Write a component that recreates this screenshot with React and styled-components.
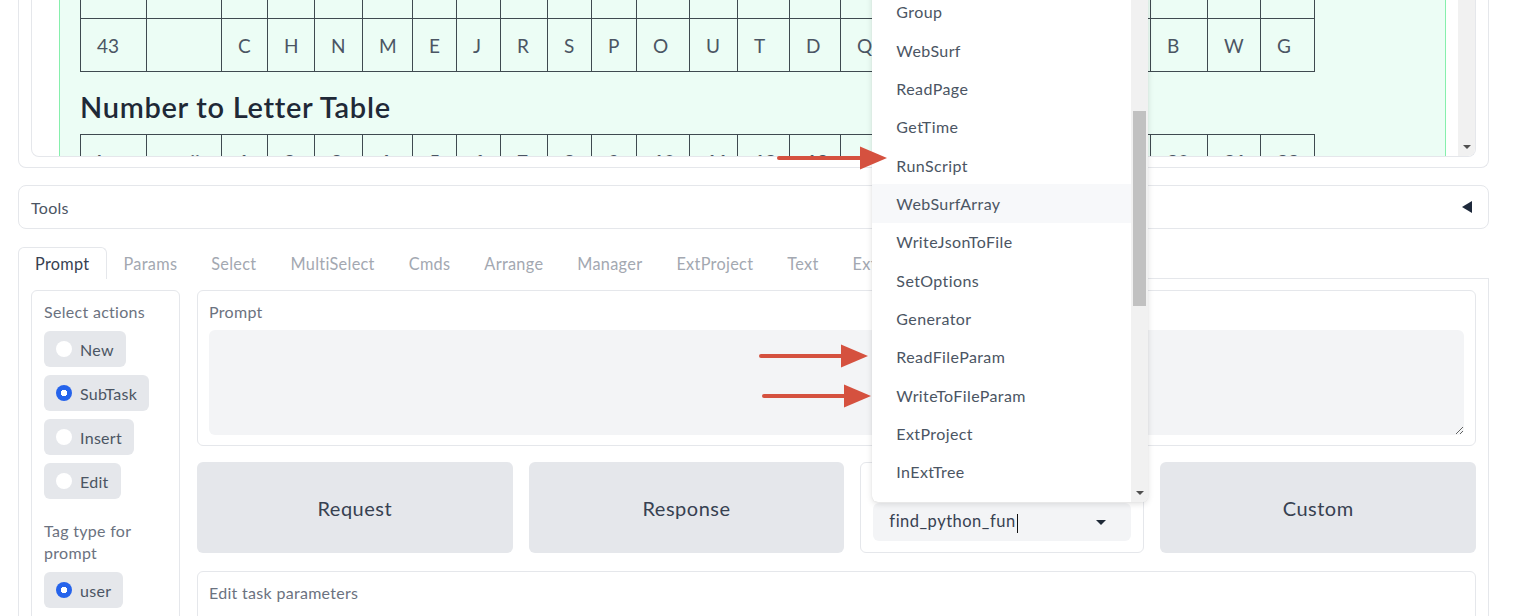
import React from 'react';
import styled, { createGlobalStyle } from 'styled-components';

const FONT = `"Lato", "Noto Sans", sans-serif`;

const Global = createGlobalStyle`
  html, body { margin: 0; padding: 0; background: #fff; }
  body { font-family: ${FONT}; color: #374151; overflow: hidden; letter-spacing: 0.3px; }
  *, *::before, *::after { box-sizing: border-box; }
`;

const Page = styled.div`
  position: relative;
  width: 1514px;
  height: 616px;
  overflow: hidden;
  padding: 0 25px 0 18px;
  display: flex;
  flex-direction: column;
`;

/* ---------- top output card ---------- */
const TopCard = styled.div`
  border: 1px solid #e5e7eb;
  border-top: none;
  border-radius: 0 0 8px 8px;
  padding: 0 12px 10px;
  background: #fff;
`;

const InnerBox = styled.div`
  height: 157px;
  border: 1px solid #e5e7eb;
  border-top: none;
  border-radius: 0 0 8px 8px;
  display: flex;
  overflow: hidden;
`;

const Viewport = styled.div`
  flex: 1;
  overflow: hidden;
  padding: 0 12px 0 27px;
`;

const ScrollTrack = styled.div`
  width: 17px;
  flex: none;
  background: #f1f1f1;
  display: flex;
  flex-direction: column;
  align-items: center;
  justify-content: flex-end;
  padding-bottom: 7px;
`;

const DownArrow = styled.span`
  width: 0;
  height: 0;
  border-left: 4px solid transparent;
  border-right: 4px solid transparent;
  border-top: 4px solid #505050;
`;

const GreenPanel = styled.div`
  margin-top: -35px;
  background: #ecfdf5;
  border-left: 1px solid #86efac;
  border-right: 1px solid #86efac;
  padding: 0 0 40px 20px;
`;

const Table = styled.table`
  border-collapse: collapse;
  table-layout: fixed;
  width: 1234px;
  font-size: 19px;
  letter-spacing: 0;
  color: #4b5563;
`;

const Col = styled.col`
  width: ${p => p.$w}px;
`;

const Cell = styled.td`
  border: 1px solid #3f4a50;
  height: 53px;
  padding: 0 0 0 16px;
  text-align: left;
  white-space: nowrap;
  overflow: hidden;
  font-weight: ${p => (p.$head ? 700 : 400)};
`;

const Heading = styled.h2`
  margin: 17px 0 10px;
  font-size: 29px;
  font-weight: 600;
  line-height: 35px;
  letter-spacing: 0.7px;
  color: #1f2937;
`;

/* ---------- accordion ---------- */
const Accordion = styled.div`
  margin-top: 17px;
  height: 44px;
  border: 1px solid #e5e7eb;
  border-radius: 8px;
  display: flex;
  align-items: center;
  justify-content: space-between;
  padding: 0 16px 0 12px;
  font-size: 16px;
  color: #4b5563;
  flex: none;
`;

const Caret = styled.span`
  width: 0;
  height: 0;
  border-top: 6px solid transparent;
  border-bottom: 6px solid transparent;
  border-right: 10px solid #1e293b;
`;

/* ---------- tabs ---------- */
const TabBar = styled.div`
  margin-top: 18px;
  height: 32px;
  display: flex;
  border-bottom: 1px solid #e5e7eb;
  flex: none;
`;

const Tab = styled.div`
  display: flex;
  align-items: center;
  padding: 0 16px;
  margin-bottom: -1px;
  font-size: 16.3px;
  background: #fff;
  color: ${p => (p.$active ? '#374151' : '#a3a8b1')};
  border: 1px solid ${p => (p.$active ? '#e5e7eb' : 'transparent')};
  border-bottom: none;
  border-radius: 6px 6px 0 0;
`;

const TabPanel = styled.div`
  flex: 1;
  border: 1px solid #e5e7eb;
  border-top: none;
  padding: 11px 12px;
  display: flex;
  gap: 17px;
  align-items: flex-start;
`;

/* ---------- left column ---------- */
const LeftCol = styled.div`
  width: 149px;
  flex: none;
  height: 400px;
  border: 1px solid #e5e7eb;
  border-radius: 6px;
  padding: 10px 12px;
  display: flex;
  flex-direction: column;
  gap: 21px;
`;

const Group = styled.div`
  display: flex;
  flex-direction: column;
  align-items: flex-start;
  gap: 8px;
`;

const Label = styled.div`
  font-size: 16px;
  line-height: 22px;
  color: #6b7280;
`;

const Pill = styled.label`
  display: inline-flex;
  align-items: center;
  gap: 8px;
  height: 36px;
  padding: 0 12px;
  background: #e5e7eb;
  border-radius: 6px;
  font-size: 16px;
  color: #4b5563;
`;

const Radio = styled.span`
  width: 16px;
  height: 16px;
  flex: none;
  border-radius: 50%;
  background: ${p => (p.$checked ? 'radial-gradient(circle, #fff 0 3px, #2563eb 3.5px)' : '#fff')};
`;

/* ---------- right column ---------- */
const RightCol = styled.div`
  flex: 1;
  display: flex;
  flex-direction: column;
  gap: 16px;
`;

const Box = styled.div`
  border: 1px solid #e5e7eb;
  border-radius: 6px;
  padding: 10px 11px;
  display: flex;
  flex-direction: column;
  gap: 7px;
  background: #fff;
  min-height: ${p => p.$minH || 0}px;
  margin-top: ${p => p.$mt || 0}px;
`;

const TextArea = styled.textarea`
  height: 105px;
  border: none;
  border-radius: 6px;
  background: #f3f4f6;
  resize: vertical;
  font-family: ${FONT};
  outline: none;
`;

const ButtonRow = styled.div`
  display: flex;
  gap: 16px;
  height: 91px;
`;

const BigButton = styled.button`
  flex: 1;
  border: none;
  border-radius: 6px;
  background: #e5e7eb;
  font-family: ${FONT};
  font-size: 20px;
  letter-spacing: 0.5px;
  color: #374151;
`;

const DropBlock = styled.div`
  position: relative;
  width: 284px;
  flex: none;
  border: 1px solid #e5e7eb;
  border-radius: 6px;
  padding: 11px 12px;
  display: flex;
  flex-direction: column;
  gap: 7px;
  background: #fff;
`;

const InputField = styled.div`
  height: 40px;
  border-radius: 6px;
  background: #f3f4f6;
  display: flex;
  align-items: center;
  justify-content: space-between;
  padding: 0 25px 0 16px;
  font-size: 16.5px;
  letter-spacing: 0.5px;
  color: #374151;
`;

const TextCaret = styled.span`
  display: inline-block;
  width: 1px;
  height: 19px;
  background: #111;
  vertical-align: middle;
  margin-left: 1px;
`;

const SelectArrow = styled.span`
  width: 0;
  height: 0;
  border-left: 5px solid transparent;
  border-right: 5px solid transparent;
  border-top: 5px solid #1f2937;
`;

/* ---------- dropdown overlay ---------- */
const ListBox = styled.div`
  position: absolute;
  left: 11px;
  bottom: 50px;
  width: 276px;
  height: 520px;
  background: #fff;
  border-radius: 0 0 6px 6px;
  box-shadow: 0 2px 6px rgba(0, 0, 0, 0.12), 0 0 1px rgba(0, 0, 0, 0.15);
  display: flex;
  overflow: hidden;
  z-index: 5;
`;

const ItemsCol = styled.div`
  flex: 1;
  display: flex;
  flex-direction: column;
  justify-content: flex-end;
  padding-bottom: 11px;
  overflow: hidden;
`;

const Item = styled.div`
  flex: none;
  height: 38.33px;
  display: flex;
  align-items: center;
  padding-left: 24px;
  font-size: 16px;
  letter-spacing: 0.4px;
  color: #4b5563;
  background: ${p => (p.$hover ? '#f7f8fa' : 'transparent')};
`;

const ListTrack = styled.div`
  width: 17px;
  flex: none;
  background: #f1f1f1;
  display: flex;
  flex-direction: column;
  align-items: center;
  padding-bottom: 7px;
`;

const Thumb = styled.div`
  width: 13px;
  height: 195px;
  margin-top: 129px;
  background: #c1c1c1;
`;

const Spacer = styled.div`
  flex: 1;
`;

const Annotations = styled.svg`
  position: absolute;
  left: 0;
  top: 0;
  width: 1514px;
  height: 616px;
  pointer-events: none;
  z-index: 10;
`;

const colW = [66, 75, 46, 47, 48, 50, 44, 44, 47, 44, 45, 53, 48, 52, 51, 52, 52, 52, 51, 52, 51, 57, 53, 54];
const letters = 'C H N M E J R S P O U T D Q A F I K L B W G'.split(' ');
const abc = 'A B C D E F G H I J K L M N O P Q R S T U V'.split(' ');
const nums = Array.from({ length: 22 }, (_, i) => String(i + 1));

const items = ['Simple', 'Group', 'WebSurf', 'ReadPage', 'GetTime', 'RunScript', 'WebSurfArray', 'WriteJsonToFile', 'SetOptions', 'Generator', 'ReadFileParam', 'WriteToFileParam', 'ExtProject', 'InExtTree'];

const tabs = ['Prompt', 'Params', 'Select', 'MultiSelect', 'Cmds', 'Arrange', 'Manager', 'ExtProject', 'Text', 'Ext'];

function Cols() {
  return (
    <colgroup>
      {colW.map((w, i) => <Col key={i} $w={w} />)}
    </colgroup>
  );
}

function Arrow({ x1, x2, y }) {
  return (
    <g>
      <line x1={x1} y1={y} x2={x2 - 22} y2={y} stroke="#d5513f" strokeWidth="4" strokeLinecap="round" />
      <polygon points={`${x2 - 27},${y - 11.5} ${x2},${y} ${x2 - 27},${y + 11.5}`} fill="#d5513f" />
    </g>
  );
}

export default function App() {
  return (
    <>
      <Global />
      <Page>
        <TopCard>
          <InnerBox>
            <Viewport>
              <GreenPanel>
                <Table>
                  <Cols />
                  <tbody>
                    <tr>
                      <Cell $head>hex</Cell>
                      <Cell $head>ascii</Cell>
                      {abc.map(l => <Cell $head key={l}>{l}</Cell>)}
                    </tr>
                    <tr>
                      <Cell>43</Cell>
                      <Cell></Cell>
                      {letters.map(l => <Cell key={l}>{l}</Cell>)}
                    </tr>
                  </tbody>
                </Table>
                <Heading>Number to Letter Table</Heading>
                <Table>
                  <Cols />
                  <tbody>
                    <tr>
                      <Cell $head>hex</Cell>
                      <Cell $head>ascii</Cell>
                      {nums.map(n => <Cell $head key={n}>{n}</Cell>)}
                    </tr>
                  </tbody>
                </Table>
              </GreenPanel>
            </Viewport>
            <ScrollTrack>
              <DownArrow />
            </ScrollTrack>
          </InnerBox>
        </TopCard>

        <Accordion>
          <span>Tools</span>
          <Caret />
        </Accordion>

        <TabBar>
          {tabs.map((t, i) => <Tab key={t} $active={i === 0}>{t}</Tab>)}
        </TabBar>

        <TabPanel>
          <LeftCol>
            <Group>
              <Label>Select actions</Label>
              <Pill><Radio />New</Pill>
              <Pill><Radio $checked />SubTask</Pill>
              <Pill><Radio />Insert</Pill>
              <Pill><Radio />Edit</Pill>
            </Group>
            <Group>
              <Label>Tag type for prompt</Label>
              <Pill><Radio $checked />user</Pill>
              <Pill><Radio />assistant</Pill>
            </Group>
          </LeftCol>

          <RightCol>
            <Box>
              <Label>Prompt</Label>
              <TextArea />
            </Box>
            <ButtonRow>
              <BigButton>Request</BigButton>
              <BigButton>Response</BigButton>
              <DropBlock>
                <Label>Functions</Label>
                <InputField>
                  <span>find_python_fun<TextCaret /></span>
                  <SelectArrow />
                </InputField>
                <ListBox>
                  <ItemsCol>
                    {items.map(it => <Item key={it} $hover={it === 'WebSurfArray'}>{it}</Item>)}
                  </ItemsCol>
                  <ListTrack>
                    <Thumb />
                    <Spacer />
                    <DownArrow />
                  </ListTrack>
                </ListBox>
              </DropBlock>
              <BigButton>Custom</BigButton>
            </ButtonRow>
            <Box $mt={2} $minH={120}>
              <Label>Edit task parameters</Label>
            </Box>
          </RightCol>
        </TabPanel>

        <Annotations viewBox="0 0 1514 616">
          <Arrow x1={779} x2={887} y={158} />
          <Arrow x1={761} x2={868} y={356} />
          <Arrow x1={764} x2={871} y={396} />
        </Annotations>
      </Page>
    </>
  );
}
